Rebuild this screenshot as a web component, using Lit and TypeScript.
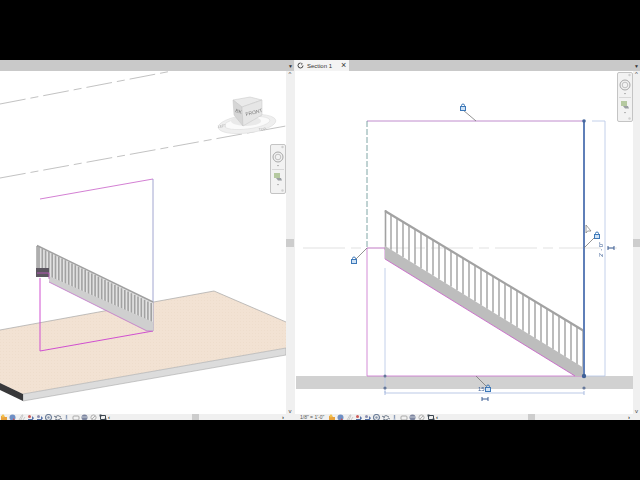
import { html, svg, css, LitElement } from "lit";
import { customElement, property } from "lit/decorators.js";

const range = (n: number) => Array.from({ length: n }, (_, i) => i);

// status bar glyphs, drawn in a 8x7 box, same row in both views
const glyphs = [
	svg`<path d="M1 2h3l1 1h2v4H1z" fill="#e8a23c"/><circle cx="3" cy="2" r="1.4" fill="#f3c24d"/>`,
	svg`<circle cx="3.5" cy="3.5" r="3" fill="#6f8fc4"/><path d="M4 4l3 3H4z" fill="#d0504c"/>`,
	svg`<path d="M1 6L4 1h1L3 6zM5 6l2-3" stroke="#c8c8c8" fill="none"/>`,
	svg`<path d="M1 5h4V2l2 2-2 3H1z" fill="#5672a8"/><circle cx="2.5" cy="2.5" r="1.5" fill="#cc5a58"/>`,
	svg`<path d="M1 5h4V2l2 2-2 3H1z" fill="#5672a8"/><circle cx="2.5" cy="2.5" r="1.5" fill="#8d8fb0"/>`,
	svg`<circle cx="3.5" cy="3.5" r="3" fill="none" stroke="#6d7f9a" stroke-width="1.2"/><circle cx="3.5" cy="3.5" r="1.2" fill="#8796ad"/>`,
	svg`<path d="M1 3q3-3 6 0M1 5q3 2 5 0" fill="none" stroke="#747f8f"/><path d="M0 2l3 2M6 4l2 1" stroke="#747f8f"/>`,
	svg`<path d="M3.5 1v4" stroke="#8d9db8" stroke-width="1.4"/><circle cx="3.5" cy="5.5" r="1" fill="#b8c4d6"/>`,
	svg`<rect x="1" y="2" width="6" height="4" rx="1" fill="none" stroke="#a9a9a9"/>`,
	svg`<circle cx="3.5" cy="3.5" r="3" fill="#7d86a0"/><path d="M1 3h5" stroke="#c6cbd6"/>`,
	svg`<circle cx="3.5" cy="3.5" r="2.6" fill="none" stroke="#b0b0b0"/><path d="M2 5l3-3" stroke="#b0b0b0"/>`,
	svg`<path d="M1.5 1.5h5v4h-5z" fill="none" stroke="#3c4650"/><rect x="0.5" y="0.5" width="2" height="2" fill="#3c4650"/><rect x="5.5" y="4.5" width="2" height="2" fill="#3c4650"/>`,
];

const lock = (x: number, y: number) => svg`
	<g transform="translate(${x} ${y})" fill="none" stroke="#3d78b8">
		<rect x="-2.5" y="-0.5" width="5" height="4" fill="#cfe2f5"/>
		<path d="M-1.5 -0.5v-1a1.5 1.5 0 0 1 3 0v1"/>
	</g>`;

const eq = (x: number, y: number) => svg`
	<path d="M${x - 3} ${y}h6M${x - 3} ${y - 2}v4M${x + 3} ${y - 2}v4" stroke="#3d5f95" fill="none"/>`;

@customElement("status-row")
export class StatusRow extends LitElement {
	static styles = css`
		:host {
			display: flex;
			align-items: flex-start;
			height: 6px;
			background: #f0f0f0;
			overflow: hidden;
			font: 6px "Liberation Sans", sans-serif;
			color: #555;
		}
		.scale {
			width: 28px;
			padding-left: 5px;
			font-size: 5px;
			line-height: 7px;
			white-space: nowrap;
		}
		.icons {
			display: flex;
		}
		svg {
			display: block;
			width: 9px;
			height: 7px;
		}
		.arrow {
			width: 8px;
			line-height: 6px;
			font-weight: bold;
			color: #333;
		}
		.track {
			flex: 1;
			position: relative;
		}
		.thumb {
			position: absolute;
			top: 0;
			width: 7px;
			height: 6px;
			background: #cdcdcd;
		}
		.end {
			width: 12px;
			line-height: 6px;
			font-weight: bold;
			color: #333;
		}
	`;

	@property({ type: String }) scale = "";
	@property({ type: Number }) thumb = 0;

	render() {
		return html`
			${this.scale ? html`<div class="scale">${this.scale}</div>` : ""}
			<div class="icons">
				${glyphs.map((g) => html`<svg viewBox="0 0 9 7">${g}</svg>`)}
			</div>
			<div class="arrow">‹</div>
			<div class="track"><div class="thumb" style="left:${this.thumb}px"></div></div>
			<div class="end">›</div>
		`;
	}
}

@customElement("nav-bar")
export class NavBar extends LitElement {
	static styles = css`
		:host {
			position: absolute;
			display: block;
			width: 16px;
			height: 50px;
			box-sizing: border-box;
			background: #f2f2f2;
			border: 1px solid #c4c4c4;
			border-radius: 2px;
		}
		svg {
			display: block;
			width: 14px;
			height: 48px;
		}
	`;

	render() {
		return html`<svg viewBox="0 0 14 48">
			<circle cx="11.5" cy="2" r="1.2" fill="#cfcfcf"/>
			<circle cx="7" cy="12" r="5" fill="none" stroke="#a8a8a8"/>
			<circle cx="7" cy="12" r="2.8" fill="none" stroke="#c0c0c0"/>
			<path d="M6 20h2l-1 1.500z" fill="#999"/>
			<path d="M1 24.500h12" stroke="#d8d8d8"/>
			<rect x="3" y="28" width="6" height="5" fill="#b5c9a0"/>
			<path d="M5 33h5l1 2.500H7z" fill="#9a9ea2"/>
			<path d="M6 39h2l-1 1.500z" fill="#999"/>
			<circle cx="11.500" cy="45.500" r="1.200" fill="#cfcfcf"/>
		</svg>`;
	}
}

@customElement("app-root")
export class AppRoot extends LitElement {
	static styles = css`
		:host {
			display: flex;
			flex-direction: column;
			width: 640px;
			height: 480px;
			background: #000;
			font-family: "Liberation Sans", sans-serif;
		}
		.bar {
			height: 60px;
			background: #000;
		}
		.workspace {
			display: flex;
			height: 360px;
			background: #f0f0f0;
		}
		.pane {
			display: flex;
			flex-direction: column;
		}
		.left {
			width: 294px;
		}
		.right {
			width: 345px;
			margin-left: 1px;
		}
		.title {
			display: flex;
			align-items: center;
			height: 11px;
			background: #c9c9c9;
			font-size: 6px;
			color: #333;
		}
		.tab {
			display: flex;
			align-items: center;
			width: 54px;
			height: 11px;
			box-sizing: border-box;
			padding-left: 2px;
			background: #f4f4f4;
		}
		.tab svg {
			width: 7px;
			height: 7px;
			margin-right: 3px;
		}
		.tab .name {
			flex: 1;
			font-size: 6px;
			white-space: nowrap;
		}
		.tab .close {
			width: 8px;
			font-size: 9px;
			line-height: 11px;
		}
		.spacer {
			flex: 1;
		}
		.drop {
			width: 7px;
			font-size: 5px;
			text-align: center;
		}
		.body {
			display: flex;
			flex: 1;
			min-height: 0;
		}
		.canvas {
			position: relative;
			flex: 1;
			background: #fff;
			overflow: hidden;
		}
		.canvas > svg {
			display: block;
			width: 100%;
			height: 100%;
			filter: blur(0.3px);
		}
		.vscroll {
			display: flex;
			flex-direction: column;
			align-items: center;
			justify-content: space-between;
			background: #f0f0f0;
			font-size: 6px;
			color: #444;
		}
		.left .vscroll {
			width: 8px;
		}
		.right .vscroll {
			width: 7px;
		}
		.vthumb {
			width: 100%;
			height: 8px;
			background: #cdcdcd;
		}
		.left nav-bar {
			left: 270px;
			top: 73px;
		}
		.right nav-bar {
			left: 322px;
			top: 1px;
		}
		.cube-text {
			font-size: 5px;
			fill: #7c7c7c;
		}
		.ring-text {
			font-size: 3.5px;
			fill: #a8a8a8;
		}
		.dim-text {
			font-size: 6px;
			fill: #3d5f95;
		}
	`;

	leftView() {
		// rail runs along these two slopes, balusters hang between them
		const bars = range(35).map((i) => 39 + i * 3.3);
		return html`<svg viewBox="0 71 286 343">
			<defs>
				<pattern id="sand" width="3" height="3" patternUnits="userSpaceOnUse">
					<rect width="3" height="3" fill="#f2e2d3"/>
					<rect width="1" height="1" fill="#eeddcc"/>
				</pattern>
			</defs>
			<path d="M0 104L172 71" stroke="#a8a8a8" stroke-width=".7" stroke-dasharray="26 5 8 5" fill="none"/>
			<path d="M0 178L286 126" stroke="#a8a8a8" stroke-width=".7" stroke-dasharray="26 5 8 5" fill="none"/>

			<ellipse cx="247" cy="124" rx="29" ry="9" transform="rotate(-7 247 124)" fill="#efefef" stroke="#dcdcdc" stroke-width=".6"/>
			<ellipse cx="247" cy="123" rx="23" ry="6" transform="rotate(-7 247 123)" fill="#fafafa" stroke="#dedede" stroke-width=".6"/>
			<ellipse cx="246" cy="121" rx="15" ry="5" fill="#e9e9e9"/>
			<path d="M233 100L250 97L262 100L242 107Z" fill="#eaeaea" stroke="#c4c4c4" stroke-width=".5"/>
			<path d="M233 100L242 107L243 126L234 115Z" fill="#d6d6d6" stroke="#c4c4c4" stroke-width=".5"/>
			<path d="M242 107L262 100V115L243 126Z" fill="#e6e6e6" stroke="#c4c4c4" stroke-width=".5"/>
			<text class="cube-text" transform="translate(246 116) rotate(-14)">FRONT</text>
			<text class="cube-text" transform="translate(235 112) rotate(16)">BK</text>
			<text class="ring-text" transform="translate(218 128) rotate(-10)">LEFT</text>
			<text class="ring-text" transform="translate(259 131) rotate(-8)">TOP</text>

			<path d="M0 330L214 291L286 322V348L23 394L0 383Z" fill="url(#sand)"/>
			<path d="M0 330L214 291L286 322" fill="none" stroke="#a6a6a6" stroke-width=".7"/>
			<path d="M23 394L286 348V355L23 401Z" fill="#dcdcdc" stroke="#a8a8a8" stroke-width=".6"/>
			<path d="M0 383L23 394V401L0 390Z" fill="#38383a"/>

			<path d="M40 199L153 179" stroke="#c860c8" stroke-width=".8" fill="none"/>
			<path d="M153 179V331" stroke="#8a8fc4" stroke-width=".8" fill="none"/>
			<path d="M40 278V351L153 331" stroke="#d050d0" stroke-width="1" fill="none"/>

			<path d="M37 246L153 302V323L37 272Z" fill="#e2e2e2"/>
			${bars.map((x) => svg`<path d="M${x} ${246 + (x - 37) * 0.5}V${272 + (x - 37) * 0.45}" stroke="#a2a2a2" stroke-width="1.6"/>`)}
			<path d="M37 245.500L153 302" stroke="#a0a0a0" stroke-width="1.4" fill="none"/>
			<path d="M37 246V270" stroke="#8c8c8c" stroke-width="1.2" fill="none"/>
			<path d="M49 276L153 322V331H147L49 282Z" fill="#cfcfcf"/>
			<path d="M49 282L147 331L153 331" stroke="#c070c8" stroke-width=".8" fill="none"/>
			<rect x="36" y="268" width="13" height="9" fill="#5c5660"/>
			<path d="M37 273H49V279" stroke="#c85ac8" stroke-width=".8" fill="none"/>
		</svg>`;
	}

	rightView() {
		const bars = range(33).map((i) => 391 + i * 6);
		return html`<svg viewBox="295 71 338 343">
			<rect x="296" y="376" width="337" height="13" fill="#d1d1d1"/>
			<path d="M303 248H622" stroke="#d4d4d4" stroke-width=".7" stroke-dasharray="42 6 10 6" fill="none"/>

			<path d="M367 121H584" stroke="#b070c0" stroke-width=".8" fill="none"/>
			<path d="M367 121V248" stroke="#5f9090" stroke-width=".8" stroke-dasharray="6 2" fill="none"/>
			<path d="M367 248V376H584M367 248H385V259" stroke="#c870cc" stroke-width=".8" fill="none"/>
			<path d="M385 268V393" stroke="#b4c4e4" stroke-width=".8" fill="none"/>

			${bars.map((x) => svg`<path d="M${x} ${211 + (x - 385) * 0.603}V${246 + (x - 385) * 0.615}" stroke="#a6a6a6" stroke-width="1.5"/>`)}
			<path d="M385 211L584 331" stroke="#a2a2a2" stroke-width="2.2" fill="none"/>
			<path d="M385.500 210V250" stroke="#a2a2a2" stroke-width="1.6" fill="none"/>
			<path d="M385 246L584 368V376H575L385 259Z" fill="#bdbdbd"/>
			<path d="M385 259L575 376" stroke="#c85ac8" stroke-width=".8" fill="none"/>

			<path d="M592 121H605V376H584" stroke="#b4c4e4" stroke-width=".8" fill="none"/>
			<path d="M385 393H584" stroke="#a9bbe0" stroke-width=".8" fill="none"/>
			<path d="M584 121V376" stroke="#5f7fb8" stroke-width="2" fill="none"/>
			<circle cx="584" cy="121" r="1.800" fill="#46689e"/>
			<circle cx="584" cy="376" r="2.200" fill="#3f6096"/>
			<circle cx="584" cy="388" r="1.600" fill="#66789a"/>
			<circle cx="385" cy="376" r="1.500" fill="#66789a"/>
			<circle cx="385" cy="388" r="1.600" fill="#66789a"/>
			<path d="M385 391v4M584 391v4" stroke="#a9bbe0" fill="none"/>

			<path d="M476 121L463 110M367 248L356 259M584 248L596 236M476 376L486 386" stroke="#777" stroke-width=".8" fill="none"/>
			${lock(463, 107)} ${lock(354, 260)} ${lock(597, 235)} ${lock(488, 388)}
			${eq(611, 248)} ${eq(485, 399)}
			<text class="dim-text" x="478" y="391">15'</text>
			<text class="dim-text" transform="translate(603 257) rotate(-90)">2' - 0"</text>
			<path d="M586 225L591 231H587.500L586 233Z" fill="#fff" stroke="#777" stroke-width=".7"/>
		</svg>`;
	}

	render() {
		return html`
			<div class="bar"></div>
			<div class="workspace">
				<div class="pane left">
					<div class="title"><div class="spacer"></div><div class="drop">▼</div></div>
					<div class="body">
						<div class="canvas">${this.leftView()}<nav-bar></nav-bar></div>
						<div class="vscroll"><span>^</span><div class="vthumb"></div><span>v</span></div>
					</div>
					<status-row thumb="76"></status-row>
				</div>
				<div class="pane right">
					<div class="title">
						<div class="tab">
							<svg viewBox="0 0 7 7"><path d="M3.500 1a2.500 2.500 0 1 0 2.500 2.500" fill="none" stroke="#444"/><path d="M3.500 0.500L6 1.500 4.500 3.500z" fill="#888"/></svg>
							<span class="name">Section 1</span>
							<span class="close">×</span>
						</div>
						<div class="spacer"></div>
						<div class="drop">▼</div>
					</div>
					<div class="body">
						<div class="canvas">${this.rightView()}<nav-bar></nav-bar></div>
						<div class="vscroll"><span>^</span><div class="vthumb"></div><span>v</span></div>
					</div>
					<status-row scale="1/8&quot; = 1'-0&quot;" thumb="84"></status-row>
				</div>
			</div>
			<div class="bar"></div>
		`;
	}
}
